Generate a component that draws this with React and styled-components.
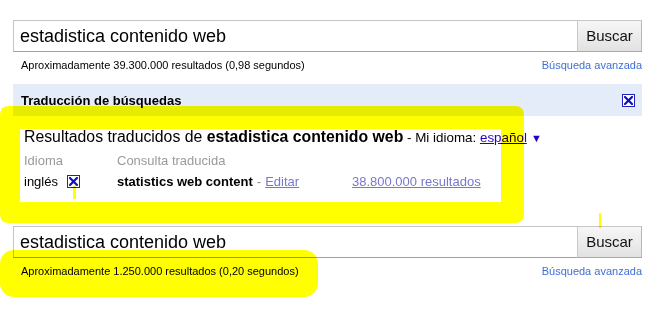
import React from 'react';
import styled, { createGlobalStyle } from 'styled-components';

const GlobalStyle = createGlobalStyle`
	html, body {
		margin: 0;
		padding: 0;
		background: #fff;
	}
	body {
		font-family: Arial, "Liberation Sans", sans-serif;
		color: #000;
	}
`;

const Page = styled.div`
	position: relative;
	width: 669px;
	height: 317px;
	overflow: hidden;
	padding: 20px 0 0 13px;
	box-sizing: border-box;
`;

const Column = styled.div`
	width: 629px;
`;

const SearchForm = styled.div`
	display: flex;
	height: 32px;
	margin-top: ${(p) => p.$top || 0}px;
`;

const SearchInput = styled.div`
	flex: 1;
	box-sizing: border-box;
	border: 1px solid #c4c4c4;
	border-bottom-color: #a0a0a0;
	border-right: none;
	font-size: 18px;
	line-height: 30px;
	padding-left: 6px;
	white-space: nowrap;
`;

const SearchButton = styled.div`
	width: 65px;
	box-sizing: border-box;
	border: 1px solid #c8c8c8;
	border-bottom-color: #a8a8a8;
	border-right-color: #b8b8b8;
	background: linear-gradient(#f6f6f6, #e2e2e2);
	font-size: 15px;
	line-height: 30px;
	text-align: center;
	color: #111;
`;

const StatsRow = styled.div`
	display: flex;
	justify-content: space-between;
	align-items: center;
	height: 16px;
	margin-top: ${(p) => p.$top || 5}px;
	padding-left: 8px;
	font-size: 11px;
`;

const AdvancedLink = styled.span`
	color: #3f6fd6;
`;

const Header = styled.div`
	display: flex;
	justify-content: space-between;
	align-items: center;
	height: 32px;
	margin-top: 11px;
	padding: 0 7px 0 8px;
	background: #e5ecf9;
	font-size: 13px;
	font-weight: bold;
`;

const CloseBox = styled.span`
	display: inline-flex;
	align-items: center;
	justify-content: center;
	width: 13px;
	height: 13px;
	box-sizing: border-box;
	border: 1px solid #2020c8;
	background: #fff;
	margin-left: ${(p) => p.$left || 0}px;
	vertical-align: middle;
`;

const TransBlock = styled.div`
	padding: 12px 0 0 11px;
	height: 98px;
	box-sizing: border-box;
`;

const TransTitle = styled.div`
	font-size: 15.8px;
	line-height: 18px;
	white-space: nowrap;
`;

const Tail = styled.span`
	font-size: 13.4px;
`;

const LangLink = styled.span`
	color: #2200cc;
	text-decoration: underline;
`;

const Arrow = styled.span`
	color: #2200cc;
	font-size: 11px;
	margin-left: 4px;
`;

const Grid = styled.div`
	display: grid;
	grid-template-columns: 93px 235px auto;
	font-size: 13px;
	line-height: 15px;
	row-gap: 6px;
	margin-top: 6px;
	align-items: center;
`;

const Label = styled.div`
	color: #9a9a9a;
`;

const Cell = styled.div`
	white-space: nowrap;
	display: flex;
	align-items: center;
`;

const Dim = styled.span`
	color: #888;
	margin: 0 4px;
`;

const VisitedLink = styled.span`
	color: #7777cc;
	text-decoration: underline;
`;

const Overlay = styled.svg`
	position: absolute;
	left: 0;
	top: 0;
	pointer-events: none;
	mix-blend-mode: multiply;
`;

function XIcon() {
	return (
		<svg width="9" height="9" viewBox="0 0 9 9">
			<path d="M1 1 L8 8 M8 1 L1 8" stroke="#1010c0" strokeWidth="2.2" strokeLinecap="square" />
		</svg>
	);
}

function Search({ top }) {
	return (
		<SearchForm $top={top}>
			<SearchInput>estadistica contenido web</SearchInput>
			<SearchButton>Buscar</SearchButton>
		</SearchForm>
	);
}

export default function App() {
	return (
		<>
			<GlobalStyle />
			<Page>
				<Column>
					<Search />
					<StatsRow>
						<span>Aproximadamente 39.300.000 resultados (0,98 segundos)</span>
						<AdvancedLink>Búsqueda avanzada</AdvancedLink>
					</StatsRow>
					<Header>
						<span>Traducción de búsquedas</span>
						<CloseBox>
							<XIcon />
						</CloseBox>
					</Header>
					<TransBlock>
						<TransTitle>
							Resultados traducidos de <b>estadistica contenido web</b>
							<Tail>
								{' '}- Mi idioma: <LangLink>español</LangLink>
							</Tail>
							<Arrow>▼</Arrow>
						</TransTitle>
						<Grid>
							<Label>Idioma</Label>
							<Label>Consulta traducida</Label>
							<div />
							<Cell>
								inglés
								<CloseBox $left={9}>
									<XIcon />
								</CloseBox>
							</Cell>
							<Cell>
								<b>statistics web content</b>
								<Dim>-</Dim>
								<VisitedLink>Editar</VisitedLink>
							</Cell>
							<Cell>
								<VisitedLink>38.800.000 resultados</VisitedLink>
							</Cell>
						</Grid>
					</TransBlock>
					<Search top={12} />
					<StatsRow $top={5}>
						<span>Aproximadamente 1.250.000 resultados (0,20 segundos)</span>
						<AdvancedLink>Búsqueda avanzada</AdvancedLink>
					</StatsRow>
				</Column>
				<Overlay width="669" height="317" viewBox="0 0 669 317">
					<path
						fillRule="evenodd"
						fill="#ffff00"
						d="M9 106 H515 Q524 106 524 115 V214 Q524 223 515 223 H9 Q0 223 0 214 V115 Q0 106 9 106 Z M20 129 V202 H501 V129 Z"
					/>
					<rect x="73" y="186" width="3" height="13" fill="#ffff00" />
					<rect x="599" y="213" width="2" height="15" fill="#ffff00" />
					<rect x="0" y="250" width="318" height="47" rx="14" fill="#ffff00" />
				</Overlay>
			</Page>
		</>
	);
}
